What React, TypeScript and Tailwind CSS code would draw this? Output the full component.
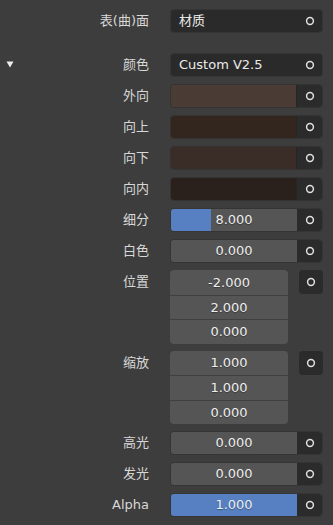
import React from 'react';

const font = { fontFamily: '"DejaVu Sans", "Noto Sans CJK SC", sans-serif' };

function Ring() {
  return (
    <svg width="10" height="10" viewBox="0 0 10 10" className="shrink-0">
      <circle cx="5" cy="5" r="3.4" fill="none" stroke="#e0e0e0" strokeWidth="1.5" />
    </svg>
  );
}

function Label({ text }: { text: string }) {
  return (
    <div className="w-[150px] shrink-0 pr-[1px] text-right text-[13px] leading-[24px] text-[#d8d8d8]">{text}</div>
  );
}

function Row({ label, children, top = false }: { label: string; children: React.ReactNode; top?: boolean }) {
  return (
    <div className={`flex ${top ? 'items-start' : 'items-center'}`}>
      <Label text={label} />
      <div className="ml-[20px] w-[153px]">{children}</div>
    </div>
  );
}

function Dropdown({ value }: { value: string }) {
  return (
    <div className="flex h-[24px] items-center justify-between rounded-[4px] border border-[#353535] bg-[#2a2a2a] pl-[8px] pr-[7px] text-[13px] text-[#eaeaea]">
      <span>{value}</span>
      <Ring />
    </div>
  );
}

function Btn() {
  return (
    <div className="flex h-full w-[25px] items-center justify-center rounded-r-[4px] bg-[#2b2b2b]">
      <Ring />
    </div>
  );
}

function Swatch({ color }: { color: string }) {
  return (
    <div className="flex h-[24px] overflow-hidden rounded-[4px] border border-[#333333]">
      <div className="flex-1 border-r border-[#262626]" style={{ background: color }} />
      <Btn />
    </div>
  );
}

function NumField({ value, fill = 0 }: { value: string; fill?: number }) {
  return (
    <div className="flex h-[24px] overflow-hidden rounded-[4px] border border-[#353535]">
      <div className="relative flex-1 bg-[#555555]">
        <div className="absolute inset-y-0 left-0 bg-[#5680c2]" style={{ width: `${fill}%` }} />
        <div className="relative flex h-full items-center justify-center text-[13px] text-[#eeeeee] [text-shadow:0_1px_1px_rgba(0,0,0,0.35)]">
          {value}
        </div>
      </div>
      <Btn />
    </div>
  );
}

function Vector({ values }: { values: string[] }) {
  return (
    <div className="flex items-start">
      <div className="w-[118px] overflow-hidden rounded-[4px] bg-[#555555]">
        {values.map((v, i) => (
          <div
            key={i}
            className={`flex h-[24.5px] items-center justify-center text-[13px] text-[#eeeeee] [text-shadow:0_1px_1px_rgba(0,0,0,0.35)] ${i > 0 ? 'border-t border-[#3f3f3f]' : ''}`}
          >
            {v}
          </div>
        ))}
      </div>
      <div className="ml-[11px] flex h-[24px] w-[24px] items-center justify-center rounded-[4px] bg-[#2b2b2b]">
        <Ring />
      </div>
    </div>
  );
}

export default function App() {
  return (
    <div className="relative h-[525px] w-[333px] overflow-hidden bg-[#3d3d3d]" style={font}>
      <div className="flex flex-col pt-[9px]">
        <Row label="表(曲)面">
          <Dropdown value="材质" />
        </Row>

        <div className="relative mt-[20px] flex flex-col gap-[7px]">
          {/* collapse arrow */}
          <svg width="8" height="7" viewBox="0 0 8 7" className="absolute left-[6px] top-[8px]">
            <path d="M0.5 0.5 H7.5 L4 6.5 Z" fill="#eeeeee" />
          </svg>
          <Row label="颜色">
            <Dropdown value="Custom V2.5" />
          </Row>
          <Row label="外向">
            <Swatch color="#4a3c34" />
          </Row>
          <Row label="向上">
            <Swatch color="#33261f" />
          </Row>
          <Row label="向下">
            <Swatch color="#3a2d28" />
          </Row>
          <Row label="向内">
            <Swatch color="#2a211c" />
          </Row>
          <Row label="细分">
            <NumField value="8.000" fill={32} />
          </Row>
          <Row label="白色">
            <NumField value="0.000" />
          </Row>
          <Row label="位置" top>
            <Vector values={['-2.000', '2.000', '0.000']} />
          </Row>
          <Row label="缩放" top>
            <Vector values={['1.000', '1.000', '0.000']} />
          </Row>
          <Row label="高光">
            <NumField value="0.000" />
          </Row>
          <Row label="发光">
            <NumField value="0.000" />
          </Row>
          <Row label="Alpha">
            <NumField value="1.000" fill={100} />
          </Row>
        </div>
      </div>
    </div>
  );
}
